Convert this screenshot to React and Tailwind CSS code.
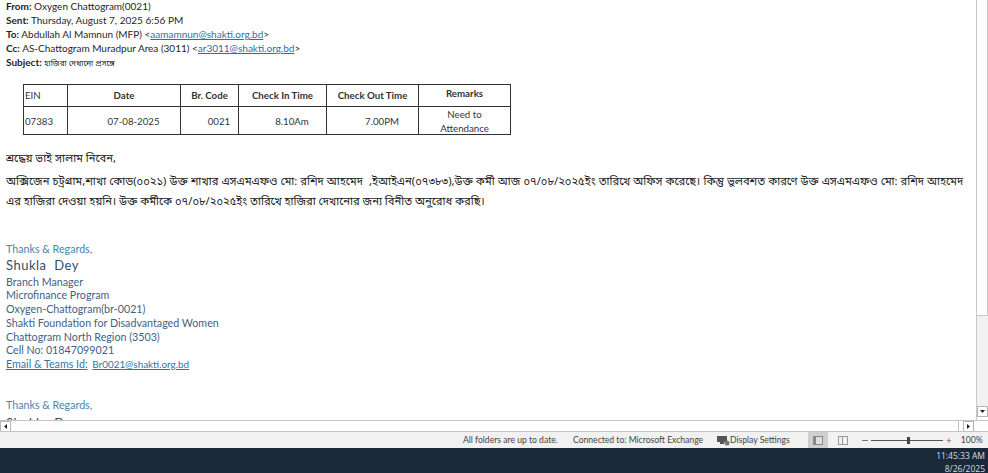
import React from 'react';

const rows = [
  { w: 'w-[43px]', head: 'EIN', cell: '07383', left: true },
  { w: 'w-[113px]', head: 'Date', cell: '07-08-2025' },
  { w: 'w-[58px]', head: 'Br. Code', cell: '0021' },
  { w: 'w-[88px]', head: 'Check In Time', cell: '8.10Am' },
  { w: 'w-[92px]', head: 'Check Out Time', cell: '7.00PM' },
  { w: 'w-[92px]', head: 'Remarks', cell: 'Need to Attendance', wrap: true },
];

const signature = [
  'Branch Manager',
  'Microfinance Program',
  'Oxygen-Chattogram(br-0021)',
  'Shakti Foundation for Disadvantaged Women',
  'Chattogram North Region (3503)',
  'Cell No: 01847099021',
];

const ArrowBtn = ({ dir }) => (
  <div className="w-[11px] h-[11px] border border-[#b5b5b5] bg-white flex items-center justify-center shrink-0">
    <svg width="5" height="5" viewBox="0 0 5 5">
      {dir === 'left' && <path d="M4 0v5L1 2.5z" fill="#222" />}
      {dir === 'right' && <path d="M1 0v5l3-2.5z" fill="#222" />}
      {dir === 'down' && <path d="M0 1h5L2.5 4z" fill="#222" />}
    </svg>
  </div>
);

const App = () => {
  return (
    <div className='w-[988px] h-[473px] overflow-hidden flex flex-col bg-white text-[#1f1f1f] font-["Lato","Open_Sans",sans-serif]'>
      <div className="h-[420px] flex shrink-0">
        {/* Message body */}
        <div className="flex-1 overflow-hidden pl-[6px]">
          <div className="text-[10px] leading-[14px] -mt-[1px]">
            <p><b className="font-bold">From:</b> Oxygen Chattogram(0021)</p>
            <p><b className="font-bold">Sent:</b> Thursday, August 7, 2025 6:56 PM</p>
            <p><b className="font-bold">To:</b> Abdullah Al Mamnun (MFP) &lt;<a className="text-[#2a6fb0] underline">aamamnun@shakti.org.bd</a>&gt;</p>
            <p><b className="font-bold">Cc:</b> AS-Chattogram Muradpur Area (3011) &lt;<a className="text-[#2a6fb0] underline">ar3011@shakti.org.bd</a>&gt;</p>
            <p className="h-[14px]"><b className="font-bold">Subject:</b> <span className='font-["Noto_Sans_Bengali","Noto_Sans",sans-serif] text-[8px]'>হাজিরা দেখানো প্রসঙ্গে</span></p>
          </div>

          <div className="ml-[17px] mt-[15px] flex w-[488px] border border-[#333] text-[9.7px] text-[#333]">
            {rows.map((r, i) => (
              <div key={r.head} className={`${r.w} shrink-0 flex flex-col ${i > 0 ? 'border-l border-[#333]' : ''}`}>
                <div className={`h-[22px] border-b border-[#333] flex items-center ${r.left ? 'pl-[1px] font-normal' : 'justify-center font-bold'} ${r.wrap ? 'pb-[5px]' : ''}`}>
                  {r.head}
                </div>
                <div className={`h-[27px] flex items-center leading-[14px] ${r.left ? 'pl-[1px]' : r.wrap ? 'justify-center text-center px-4' : 'justify-center pl-[19px]'}`}>
                  {r.cell}
                </div>
              </div>
            ))}
          </div>

          <div className='mt-[15px] text-[11.2px] leading-[20px] text-[#222] font-["Noto_Sans_Bengali","Noto_Sans","DejaVu_Sans",sans-serif] whitespace-nowrap'>
            <p className="mb-[3px] h-[20px]">শ্রদ্ধেয় ভাই সালাম নিবেন,</p>
            <p className="h-[20px] [word-spacing:0.15px]">অক্সিজেন চট্রগ্রাম,শাখা কোড(০০২১) উক্ত শাখার এসএমএফও মো: রশিদ আহমেদ&nbsp; ,ইআইএন(০৭৩৮৩),উক্ত কর্মী আজ ০৭/০৮/২০২৫ইং তারিখে অফিস করেছে। কিন্তু ভুলবশত কারণে উক্ত এসএমএফও মো: রশিদ আহমেদ</p>
            <p className="h-[20px]">এর হাজিরা দেওয়া হয়নি। উক্ত কর্মীকে ০৭/০৮/২০২৫ইং তারিখে হাজিরা দেখানোর জন্য বিনীত অনুরোধ করছি।</p>
          </div>

          <div className='mt-[29px] font-["Lato","Roboto",sans-serif] text-[#3f6285] text-[10.7px] leading-[13.7px]'>
            <p className="text-[#4a86a8]">Thanks &amp; Regards,</p>
            <p className="text-[13px] leading-[17px] mt-[1px] mb-[1px] tracking-[0.5px] text-[#33506b]">Shukla&nbsp; Dey</p>
            {signature.map((s) => <p key={s}>{s}</p>)}
            <p className="text-[#2f75a8]"><span className="underline">Email &amp; Teams Id:</span> <span className="underline text-[9.9px] ml-[2px]">Br0021@shakti.org.bd</span></p>
            <p className="text-[#4a86a8] mt-[26px]">Thanks &amp; Regards,</p>
            <p className="text-[13px] leading-[17px] mt-[4px] tracking-[0.5px] text-[#33506b]">Shukla&nbsp; Dey</p>
          </div>
        </div>

        {/* Vertical scrollbar */}
        <div className="w-[12px] border-l border-[#c8c8c8] bg-[#f1f1f1] flex flex-col shrink-0">
          <div className="h-[316px] bg-white border-r border-b border-[#c8c8c8] shrink-0" />
          <div className="flex-1" />
          <div className="pb-[3px] bg-white"><ArrowBtn dir="down" /></div>
        </div>
      </div>

      {/* Horizontal scrollbar */}
      <div className="h-[11px] flex shrink-0 border-t border-[#c4c4c4] bg-white">
        <ArrowBtn dir="left" />
        <div className="w-[948px] border-r border-[#c4c4c4]" />
        <div className="w-[4px]" />
        <ArrowBtn dir="right" />
      </div>

      {/* Status bar */}
      <div className="h-[17px] bg-[#f1f1f1] border-t border-[#c4c4c4] flex items-center text-[8.6px] text-[#444] shrink-0 whitespace-nowrap">
        <span className="ml-[463px] w-[96px] shrink-0">All folders are up to date.</span>
        <span className="ml-[14px] w-[130px] shrink-0">Connected to: Microsoft Exchange</span>
        <svg className="ml-[14px] shrink-0" width="13" height="11" viewBox="0 0 13 11">
          <rect x="0" y="1" width="10" height="6" fill="#555" />
          <rect x="3" y="7" width="4" height="2" fill="#555" />
          <circle cx="10" cy="8" r="2.5" fill="#777" />
        </svg>
        <span className="w-[61px] shrink-0">Display Settings</span>
        <div className="ml-[17px] w-[20px] h-full bg-[#cfcfcf] flex items-center justify-center shrink-0">
          <div className="w-[10px] h-[9px] border border-[#888] bg-[#dedede] border-l-[3px]" />
        </div>
        <div className="ml-[10px] w-[10px] h-[9px] border border-[#999] flex shrink-0"><div className="w-1/2 border-r border-[#999]" /></div>
        <span className="ml-[14px] w-[6px] h-px bg-[#777] shrink-0" />
        <div className="relative ml-[3px] w-[72px] h-px bg-[#555] shrink-0">
          <div className="absolute left-[36px] -top-[3px] w-[3px] h-[7px] bg-[#444]" />
        </div>
        <span className="ml-[3px] text-[10px] text-[#666]">+</span>
        <span className="ml-[9px]">100%</span>
      </div>

      {/* Taskbar */}
      <div className='flex-1 bg-[#1b2838] flex flex-col items-end pr-[3px] pt-[2px] text-[8.5px] leading-[12.5px] text-[#d8dde2] font-["Open_Sans",sans-serif]'>
        <span>11:45:33 AM</span>
        <span>8/26/2025</span>
      </div>
    </div>
  );
};

export default App;
